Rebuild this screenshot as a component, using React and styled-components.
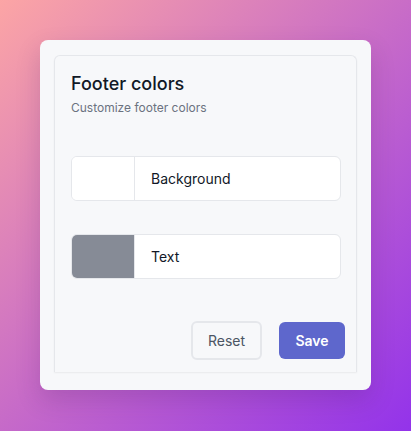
import React from 'react'
import styled, { createGlobalStyle } from 'styled-components'

const GlobalStyle = createGlobalStyle`
  html, body {
    margin: 0;
    padding: 0;
  }
  body {
    font-family: Inter, "Noto Sans", sans-serif;
  }
`

const Page = styled.div`
  width: 411px;
  height: 431px;
  box-sizing: border-box;
  padding: 40px;
  background: linear-gradient(135deg, #fca5a5 0%, #c76bc8 50%, #9333ea 100%);
`

const Card = styled.div`
  width: 331px;
  height: 350px;
  box-sizing: border-box;
  padding: 15px 14px 18px 14px;
  background: #f7f8fa;
  border-radius: 8px;
  box-shadow: 0 10px 25px rgba(60, 20, 90, 0.18);
`

const Panel = styled.div`
  height: 100%;
  box-sizing: border-box;
  padding: 17px 16px 12px 16px;
  border: 1px solid #e5e7eb;
  border-bottom: none;
  border-radius: 6px 6px 0 0;
  box-shadow: 0 1px 2px rgba(0, 0, 0, 0.06);
  display: flex;
  flex-direction: column;
`

const Title = styled.h2`
  margin: 0;
  font-size: 18px;
  font-weight: 500;
  line-height: 22px;
  color: #111827;
`

const Subtitle = styled.p`
  margin: 5px 0 0;
  font-size: 12px;
  line-height: 15px;
  color: #6b7280;
`

const Fields = styled.div`
  margin-top: 41px;
  display: flex;
  flex-direction: column;
  gap: 33px;
`

const ColorRow = styled.div`
  width: 270px;
  height: 45px;
  box-sizing: border-box;
  display: flex;
  background: #fff;
  border: 1px solid #e5e7eb;
  border-radius: 6px;
  overflow: hidden;
`

const Swatch = styled.div`
  width: 62px;
  flex: none;
  background: ${p => p.color};
  border-right: 1px solid #e5e7eb;
`

const Label = styled.span`
  padding-left: 16px;
  display: flex;
  align-items: center;
  font-size: 14px;
  color: #111827;
`

const Actions = styled.div`
  margin-top: auto;
  margin-right: -5px;
  display: flex;
  justify-content: flex-end;
  align-items: center;
  gap: 17px;
`

const Button = styled.button`
  height: ${p => (p.primary ? '37px' : '39px')};
  padding: 0;
  width: ${p => (p.primary ? '66px' : '71px')};
  box-sizing: border-box;
  font-family: inherit;
  font-size: 14px;
  font-weight: ${p => (p.primary ? 600 : 400)};
  color: ${p => (p.primary ? '#fff' : '#4b5563')};
  background: ${p => (p.primary ? '#5e67cc' : '#f7f8fa')};
  border: ${p => (p.primary ? 'none' : '2px solid #e5e7eb')};
  border-radius: 6px;
`

const colors = [
  { name: 'Background', value: '#ffffff' },
  { name: 'Text', value: '#868b96' }
]

export default function App () {
  return (
    <>
      <GlobalStyle />
      <Page>
        <Card>
          <Panel>
            <Title>Footer colors</Title>
            <Subtitle>Customize footer colors</Subtitle>
            <Fields>
              {colors.map(c => (
                <ColorRow key={c.name}>
                  <Swatch color={c.value} />
                  <Label>{c.name}</Label>
                </ColorRow>
              ))}
            </Fields>
            <Actions>
              <Button>Reset</Button>
              <Button primary>Save</Button>
            </Actions>
          </Panel>
        </Card>
      </Page>
    </>
  )
}
